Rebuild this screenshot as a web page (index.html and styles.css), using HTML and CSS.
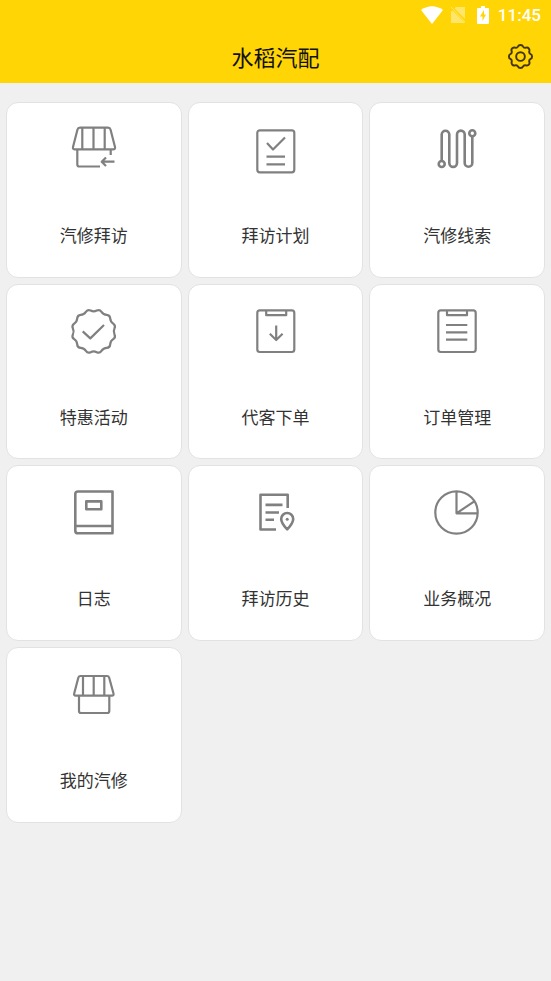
FILE: index.html
```html
<!DOCTYPE html>
<html lang="zh-CN">
<head>
<meta charset="utf-8">
<meta name="viewport" content="width=device-width, initial-scale=1">
<title>水稻汽配</title>
<link rel="stylesheet" href="styles.css">
</head>
<body>
<header class="header">
  <div class="status">
    <svg class="status-wifi" viewBox="0 0 22 18" aria-hidden="true"><path d="M0 4Q11-3.500 22 4L11 18Z"/></svg>
    <svg class="status-sim" viewBox="0 0 14 16" aria-hidden="true"><path d="M5 0h9v12L3.500 1.500ZM0 5l1.500-1.500L14 16H0Z"/><path d="M0 0l14 15" class="slash"/></svg>
    <svg class="status-battery" viewBox="0 0 12 18" aria-hidden="true"><path fill-rule="evenodd" d="M4 0h4v2h3q1 0 1 1v14q0 1-1 1H1q-1 0-1-1V3q0-1 1-1h3ZM7 4L3 10.500h2.500V15L9 8.500H7Z"/></svg>
    <time>11:45</time>
  </div>
  <div class="titlebar">
    <h1>水稻汽配</h1>
    <button class="settings" type="button" aria-label="设置">
      <svg viewBox="-14 -14 28 28" aria-hidden="true">
        <circle r="4.500"/>
        <path d="M-2.500-10.500Q-2-12 0-12T2.500-10.500Q3.500-8.500 5.700-9.200Q7.500-9.800 8.500-8.500T9.200-5.700Q8.500-3.500 10.500-2.500Q12-2 12 0T10.500 2.500Q8.500 3.500 9.200 5.700Q9.800 7.500 8.500 8.500T5.700 9.200Q3.500 8.500 2.500 10.500Q2 12 0 12T-2.500 10.500Q-3.500 8.500-5.700 9.200Q-7.500 9.800-8.500 8.500T-9.200 5.700Q-8.500 3.500-10.500 2.500Q-12 2-12 0T-10.500-2.500Q-8.500-3.500-9.200-5.700Q-9.800-7.500-8.500-8.500T-5.700-9.200Q-3.500-8.500-2.500-10.500Z"/>
      </svg>
    </button>
  </div>
</header>
<main class="grid">
  <a class="card" href="#visit">
    <svg viewBox="0 0 56 56" aria-hidden="true"><path d="M14 4.700H42Q44 4.700 44.500 6.500L49 24Q49.500 26.300 47 26.300H9Q6.500 26.300 7 24L11.500 6.500Q12 4.700 14 4.700ZM16.300 4.700V26.300M27.500 4.700V26.300M38.700 4.700V26.300M11.300 26.300V41.500Q11.300 43.500 13.300 43.500H34M44.700 26.300V32M48.500 38.700H36M40 34.500L35.700 38.700L40 43"/></svg>
    <span>汽修拜访</span>
  </a>
  <a class="card" href="#plan">
    <svg viewBox="0 0 56 56" aria-hidden="true"><rect x="9.300" y="7.300" width="37" height="42" rx="2.500"/><path d="M19 20L25 26.500L37 14.500M18.500 33.700H37M18.500 41.300H37"/></svg>
    <span>拜访计划</span>
  </a>
  <a class="card" href="#leads">
    <svg class="bold" viewBox="0 0 56 56" aria-hidden="true"><circle cx="12.700" cy="41" r="3"/><circle cx="43.300" cy="10.300" r="3"/><path d="M12.700 38V11.500a3.800 3.800 0 0 1 7.600 0V40a3.850 3.850 0 0 0 7.700 0V11.500a3.850 3.850 0 0 1 7.700 0V40a3.800 3.800 0 0 0 7.600 0V13.300"/></svg>
    <span>汽修线索</span>
  </a>
  <a class="card" href="#offers">
    <svg viewBox="0 0 56 56" aria-hidden="true">
      <g transform="translate(27.700 26.400)"><path d="M-3-20.800Q0-19.300 3-20.800Q5.950-22.200 7.800-19.500Q9.650-16.700 13-16.500Q16.300-16.300 16.500-13Q16.700-9.650 19.500-7.800Q22.200-5.950 20.800-3Q19.300 0 20.800 3Q22.200 5.950 19.500 7.800Q16.700 9.650 16.500 13Q16.300 16.300 13 16.500Q9.650 16.700 7.800 19.500Q5.950 22.200 3 20.800Q0 19.300-3 20.800Q-5.950 22.200-7.800 19.500Q-9.650 16.700-13 16.500Q-16.300 16.300-16.500 13Q-16.700 9.650-19.500 7.800Q-22.200 5.950-20.800 3Q-19.300 0-20.800-3Q-22.200-5.950-19.500-7.800Q-16.700-9.650-16.500-13Q-16.300-16.300-13-16.500Q-9.650-16.700-7.800-19.500Q-5.950-22.200-3-20.800Z"/></g>
      <path d="M16.700 26.400L24.300 33.400L38 20"/>
    </svg>
    <span>特惠活动</span>
  </a>
  <a class="card" href="#order">
    <svg viewBox="0 0 56 56" aria-hidden="true"><rect x="9.300" y="5.400" width="37" height="41.600" rx="2.500"/><path d="M18.200 5.400V10.200H38.200V5.400M28.200 20.500V35M21.800 28.800L28.200 35L34.600 28.800"/></svg>
    <span>代客下单</span>
  </a>
  <a class="card" href="#orders">
    <svg viewBox="0 0 56 56" aria-hidden="true"><rect x="9.300" y="5.400" width="37.400" height="41.600" rx="2.500"/><path d="M18 5.400V10.200H38V5.400M17 20H38.300M17 27.300H38.300M17 34.700H38.300"/></svg>
    <span>订单管理</span>
  </a>
  <a class="card" href="#journal">
    <svg class="bold" viewBox="0 0 56 56" aria-hidden="true"><path d="M12 5.500H46.500V47.300H12Q9.300 47.300 9.300 44.700V8Q9.300 5.500 12 5.500ZM9.300 40H46.500M20.300 15.400H35.300V23.200H20.300Z"/></svg>
    <span>日志</span>
  </a>
  <a class="card" href="#history">
    <svg class="bold" viewBox="0 0 56 56" aria-hidden="true"><path d="M28 43.500H12.500V8.700H39.700V22M17.500 18.900H34.500M17.500 26.500H31M17.500 33.700H26M39.200 43.400Q33.200 37.200 33.200 33A6 6 0 0 1 45.200 33Q45.200 37.200 39.200 43.400Z"/><circle class="dot" cx="39.200" cy="33.200" r="1.500"/></svg>
    <span>拜访历史</span>
  </a>
  <a class="card" href="#overview">
    <svg viewBox="0 0 56 56" aria-hidden="true"><circle cx="27.500" cy="26.500" r="21.200"/><path d="M27.500 5.300V27.300L45.300 15.300M27.500 27.300H48.500"/></svg>
    <span>业务概况</span>
  </a>
  <a class="card" href="#mine">
    <svg viewBox="0 0 56 56" aria-hidden="true"><path d="M14.500 8H41Q42.700 8 43.200 9.700L47.500 25.500Q48 27.700 46 27.700H9.700Q7.700 27.700 8.200 25.500L12.300 9.700Q12.800 8 14.500 8ZM17 8V27.700M27.700 8V27.700M38.300 8V27.700M13 27.700V43Q13 45 15 45H41.300Q43.300 45 43.300 43V27.700"/></svg>
    <span>我的汽修</span>
  </a>
</main>
</body>
</html>
```
FILE: styles.css
```css
* {
  box-sizing: border-box;
}

body {
  margin: 0;
  min-height: 100vh;
  background: #f0f0f0;
  color: #333;
  font-family: Roboto, "Noto Sans CJK SC", sans-serif;
}

.header {
  background: #ffd506;
}

.status {
  display: flex;
  align-items: center;
  justify-content: flex-end;
  height: 30px;
  padding: 0 10px;
  color: #fff;
  font-size: 17px;
  font-weight: 500;
  line-height: 30px;
}

.status svg {
  fill: #fff;
}

.status-wifi {
  width: 22px;
  height: 18px;
  margin-right: 8px;
}

.status .status-sim {
  width: 14px;
  height: 16px;
  margin-right: 12px;
  fill: #ffe66b;
}

.slash {
  fill: none;
  stroke: #ffe66b;
}

.status-battery {
  width: 12px;
  height: 18px;
  margin-right: 9px;
}

.titlebar {
  display: grid;
  grid-template-columns: 1fr auto 1fr;
  align-items: center;
  height: 53px;
  padding: 0 17px;
}

.titlebar h1 {
  grid-column: 2;
  margin: 0;
  padding-top: 4px;
  color: #111;
  font-size: 22px;
  font-weight: 400;
  line-height: 32px;
}

.settings {
  justify-self: end;
  width: 27px;
  height: 27px;
  padding: 0;
  border: 0;
  background: none;
}

.settings svg {
  display: block;
  fill: none;
  stroke: #43360a;
  stroke-width: 2;
}

.grid {
  display: grid;
  grid-template-columns: repeat(3, 1fr);
  gap: 6px;
  padding: 19px 6px;
}

.card {
  display: flex;
  flex-direction: column;
  align-items: center;
  gap: 45px;
  aspect-ratio: 1;
  padding-top: 20px;
  border: 1px solid #e2e2e2;
  border-radius: 12px;
  background: #fff;
  color: #333;
  font-size: 17px;
  line-height: 24px;
  text-decoration: none;
}

.card svg {
  width: 56px;
  height: 56px;
  fill: none;
  stroke: #808080;
  stroke-width: 2.2;
  stroke-linejoin: round;
}

.card .bold {
  stroke-width: 2.6;
}

.card .dot {
  fill: #808080;
  stroke: none;
}
```
